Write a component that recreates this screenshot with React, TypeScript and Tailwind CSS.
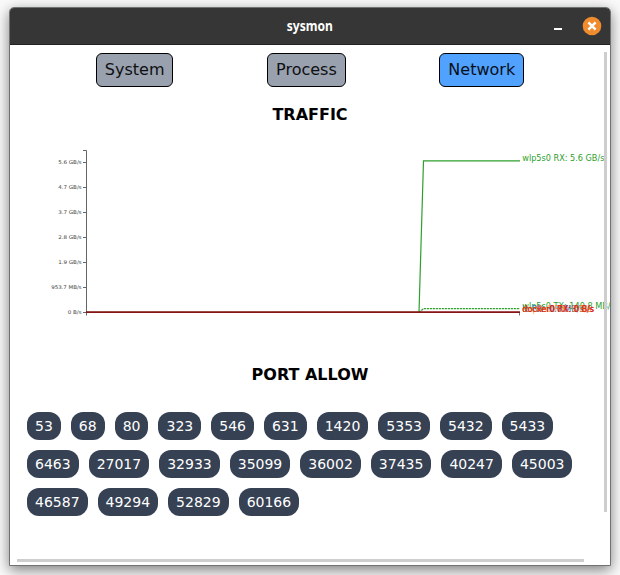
import React from "react";

const ports = [
  53, 68, 80, 323, 546, 631, 1420, 5353, 5432, 5433, 6463, 27017, 32933, 35099,
  36002, 37435, 40247, 45003, 46587, 49294, 52829, 60166,
];

const ticks = [
  { y: 117.5, label: "5.6 GB/s", width: 23.5 },
  { y: 142.5, label: "4.7 GB/s", width: 23.5 },
  { y: 167.5, label: "3.7 GB/s", width: 23.5 },
  { y: 192.5, label: "2.8 GB/s", width: 23.5 },
  { y: 217.5, label: "1.9 GB/s", width: 23.5 },
  { y: 242.5, label: "953.7 MB/s", width: 30.5 },
  { y: 267.5, label: "0 B/s", width: 14 },
];

function TitleBar() {
  return (
    <header className="flex h-[37px] shrink-0 items-center border-b border-[#222222] bg-[#363636]">
      <div className="w-[70px]" />
      <h1 className="flex-1 text-center font-['Noto_Sans','Open_Sans',sans-serif] text-[14px] font-bold leading-5 text-white">
        <span className="inline-block scale-x-[0.86]">sysmon</span>
      </h1>
      <div className="flex w-[70px] items-center justify-end gap-[21px] pr-[9px]">
        <svg width="8" height="18" viewBox="0 0 8 18">
          <rect y="11" width="8" height="2" fill="#fff" />
        </svg>
        <svg width="18" height="18" viewBox="0 0 18 18" className="overflow-visible">
          <circle cx="9" cy="9" r="9.3" fill="#f08c2e" />
          <path d="M5.4 5.4l7.2 7.2M12.6 5.4l-7.2 7.2" stroke="#fff" strokeWidth="2.4" />
        </svg>
      </div>
    </header>
  );
}

function Tab({ label, active = false }: { label: string; active?: boolean }) {
  return (
    <button
      className={`h-[34px] rounded-[6px] border border-black px-2 text-base leading-6 ${
        active ? "bg-[#51a2ff]" : "bg-[#99a1af]"
      }`}
    >
      <span className="opacity-90">{label}</span>
    </button>
  );
}

function TrafficChart() {
  return (
    <svg width="600" height="200" viewBox="0 0 600 200" className="block overflow-hidden">
      <g transform="translate(0 -82)">
        <path d="M73 105.5h3.5v165" fill="none" stroke="#666" />
        {ticks.map((t) => (
          <g key={t.label}>
            <path d={`M73 ${t.y}h3.5`} stroke="#666" />
            <text
              x={71.7 - t.width}
              y={t.y + 1.6}
              fontSize="5.2"
              textLength={t.width}
              lengthAdjust="spacingAndGlyphs"
              fill="#444"
            >
              {t.label}
            </text>
          </g>
        ))}
        <path d="M509.5 267v3.5" stroke="#777" />
        <path d="M76 267.5H409L413.5 115.9H510" fill="none" stroke="#2ca02c" strokeWidth="1.2" />
        <path
          d="M76 267.3H409L413.5 263.7H510"
          fill="none"
          stroke="#2ca02c"
          strokeWidth="1.3"
          strokeDasharray="2.2 0.8"
        />
        <path d="M76 267.2H510" stroke="#861414" strokeWidth="1.8" />
        <g fontSize="8.15">
          <text x="512.3" y="115.7" fill="#2ca02c">wlp5s0 RX: 5.6 GB/s</text>
          <text x="512.3" y="264.3" fill="#2ca02c">wlp5s0 TX: 140.8 MB/s</text>
          <text x="512.3" y="267" fill="#d62728">docker0 TX: 0 B/s</text>
          <text x="512.3" y="266.6" fill="#1f77b4">lo RX: 0.0 MB/s</text>
          <text x="512.3" y="267" fill="#d62728">docker0 RX: 0 B/s</text>
          <text x="512.3" y="267" fill="#ff7f0e" fillOpacity="0.8">enp4s0 RX: 0 B/s</text>
          <text x="512.3" y="267" fill="#e02a18" fillOpacity="0.7">docker0 RX: 0 B/s</text>
        </g>
      </g>
    </svg>
  );
}

export default function App() {
  return (
    <div className="h-[575px] w-[620px] overflow-hidden bg-[#fafafa] px-[9px] pt-[7px] font-['DejaVu_Sans',sans-serif] text-black">
      <div className="relative flex h-[559px] w-[602px] flex-col overflow-hidden rounded-t-[5px] border border-[#6f7273] bg-white shadow-[0_4px_14px_0_rgba(0,0,0,0.5)]">
        <TitleBar />
        <main className="flex flex-1 flex-col pt-2">
          <nav className="mx-auto flex w-[522px] justify-around">
            <Tab label="System" />
            <Tab label="Process" />
            <Tab label="Network" active />
          </nav>
          <h2 className="mt-4 text-center text-base font-bold leading-6">TRAFFIC</h2>
          <TrafficChart />
          <h2 className="mt-9 text-center text-base font-bold leading-6">PORT ALLOW</h2>
          <ul className="mt-[25px] flex flex-wrap gap-[10px] pl-[17px] pr-[17px]">
            {ports.map((port) => (
              <li
                key={port}
                className="h-7 rounded-xl bg-[#364153] px-2 py-1 text-sm leading-5 text-white"
              >
                {port}
              </li>
            ))}
          </ul>
        </main>
        <div className="absolute right-[3px] top-11 h-[460px] w-[3px] bg-[#cecece]" />
        <div className="absolute bottom-[3px] left-[7px] h-[3px] w-[567px] bg-[#cecece]" />
      </div>
    </div>
  );
}
